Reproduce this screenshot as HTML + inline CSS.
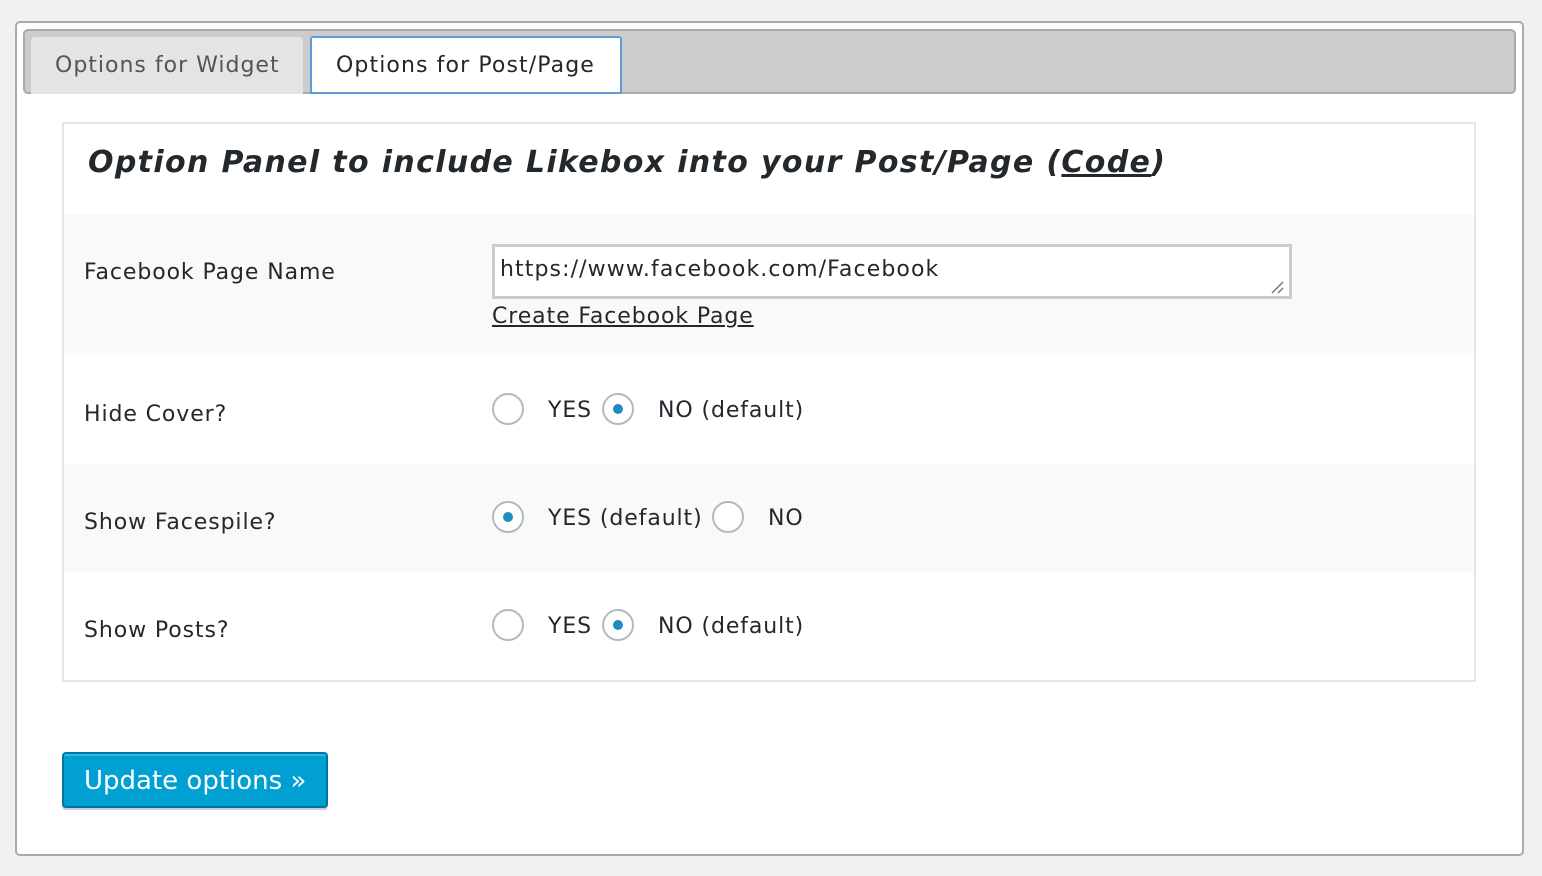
<!DOCTYPE html>
<html><head><meta charset="utf-8"><style>
*{box-sizing:border-box;margin:0;padding:0}
body{width:1542px;height:876px;background:#f1f1f1;font-family:"DejaVu Sans","Liberation Sans",sans-serif;color:#23282d;position:relative;overflow:hidden}
.a{position:absolute;white-space:nowrap}
.outer{left:15px;top:21px;width:1509px;height:835px;background:#fff;border:2px solid #aaa;border-radius:5px}
.bar{left:23px;top:29px;width:1493px;height:65px;background:#ccc;border:2px solid #aaa;border-radius:5px}
.t1{left:31px;top:37px;width:272px;height:57px;background:#e4e4e4;border-radius:4px 4px 0 0;font-size:22px;color:#555;padding:16px 0 0 24px;letter-spacing:1px}
.t2{left:310px;top:36px;width:312px;height:58px;background:#fff;border:2px solid #5b9dd9;border-radius:3px 3px 0 0;font-size:22px;color:#23282d;padding:15px 0 0 24px;letter-spacing:1.1px}
.panel{left:62px;top:122px;width:1414px;height:560px;border:2px solid #e5e5e5;background:#fff}
.row{left:64px;width:1409px;background:#f9f9f9}
.lbl{left:84px;font-size:22px;letter-spacing:0.9px}
.title{left:88px;top:145px;font-size:30px;font-weight:bold;font-style:italic;letter-spacing:1.35px}
.inp{left:492px;top:244px;width:800px;height:55px;border:3px solid #ccc;background:#fff;font-size:22px;padding:10px 0 0 5px;letter-spacing:1.1px}
.r{width:32px;height:32px;border:2px solid #b4b9be;border-radius:50%;background:#fff}
.r.on::after{content:"";position:absolute;left:9px;top:9px;width:10px;height:10px;border-radius:50%;background:#1e8cbe}
.tx{font-size:22px;letter-spacing:0.9px}
.btn{left:62px;top:752px;width:266px;height:56px;background:#00a0d2;border:2px solid #0073aa;border-radius:4px;color:#fff;font-size:26px;padding:12px 0 0 20px;box-shadow:inset 0 2px 0 #2eb8e6,0 2px 0 #ccc}
</style></head><body>
<div class="a outer"></div>
<div class="a bar"></div>
<div class="a t1">Options for Widget</div>
<div class="a t2">Options for Post/Page</div>
<div class="a panel"></div>
<div class="a title">Option Panel to include Likebox into your Post/Page (<u>Code</u>)</div>
<div class="a row" style="top:214px;height:141px"></div>
<div class="a row" style="top:464px;height:108px"></div>
<div class="a lbl" style="top:260px">Facebook Page Name</div>
<div class="a inp">https://www.facebook.com/Facebook</div>
<svg class="a" style="left:1270px;top:280px" width="16" height="16"><path d="M2 13L13 2M8 13L13 8" stroke="#777" stroke-width="1.5"/></svg>
<div class="a tx" style="left:492px;top:304px"><u>Create Facebook Page</u></div>

<div class="a lbl" style="top:402px">Hide Cover?</div>
<div class="a r" style="left:492px;top:393px"></div>
<div class="a tx" style="left:548px;top:398px">YES</div>
<div class="a r on" style="left:602px;top:393px"></div>
<div class="a tx" style="left:658px;top:398px">NO (default)</div>

<div class="a lbl" style="top:510px">Show Facespile?</div>
<div class="a r on" style="left:492px;top:501px"></div>
<div class="a tx" style="left:548px;top:506px">YES (default)</div>
<div class="a r" style="left:712px;top:501px"></div>
<div class="a tx" style="left:768px;top:506px">NO</div>

<div class="a lbl" style="top:618px">Show Posts?</div>
<div class="a r" style="left:492px;top:609px"></div>
<div class="a tx" style="left:548px;top:614px">YES</div>
<div class="a r on" style="left:602px;top:609px"></div>
<div class="a tx" style="left:658px;top:614px">NO (default)</div>

<div class="a btn">Update options »</div>
</body></html>
